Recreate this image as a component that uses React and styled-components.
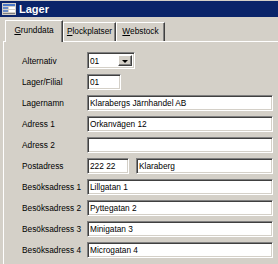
import React from "react";
import styled, { createGlobalStyle } from "styled-components";

const Global = createGlobalStyle`
  html, body { margin: 0; padding: 0; background: #d4d0c8; }
  body { font-family: "Liberation Sans", Arial, sans-serif; }
`;

const Window = styled.div`
  width: 278px;
  height: 264px;
  overflow: hidden;
  background: #d4d0c8;
  display: flex;
  flex-direction: column;
  box-sizing: border-box;
`;

const TitleBar = styled.div`
  height: 16px;
  margin-top: 1px;
  background: #0a246a;
  display: flex;
  align-items: center;
  gap: 3px;
  padding-left: 2px;
  color: #fff;
  font-weight: bold;
  font-size: 11px;
`;

const Icon = styled.svg`
  width: 14px;
  height: 12px;
  flex: none;
`;

const Body = styled.div`
  flex: 1;
  display: flex;
  flex-direction: column;
  padding: 3px 0 0 3px;
`;

const TabRow = styled.div`
  display: flex;
  align-items: flex-end;
  height: 21px;
  padding-left: 2px;
`;

const Tab = styled.div`
  box-sizing: border-box;
  width: ${(p) => p.$w}px;
  height: ${(p) => (p.$active ? "22px" : "19px")};
  padding-top: ${(p) => (p.$active ? "4px" : "3px")};
  margin-bottom: ${(p) => (p.$active ? "-1px" : "0")};
  text-align: center;
  border-left: 1px solid #fff;
  border-top: 1px solid #fff;
  border-right: 1px solid #404040;
  box-shadow: inset -1px 0 #808080;
  background: #d4d0c8;
  font-size: 8.3px;
  color: #000;
  position: relative;
  z-index: ${(p) => (p.$active ? 1 : 0)};
  u { text-decoration: underline; }
`;

const Panel = styled.div`
  flex: 1;
  border-top: 1px solid #fff;
  border-left: 1px solid #fff;
  display: flex;
  flex-direction: column;
  gap: 5px;
  padding: 10px 0 0 18px;
`;

const Row = styled.div`
  display: flex;
  align-items: center;
  height: ${(p) => p.$h || 16}px;
`;

const Label = styled.div`
  width: 65px;
  flex: none;
  font-size: 8.3px;
  color: #000;
  white-space: nowrap;
`;

const Field = styled.div`
  box-sizing: border-box;
  flex: none;
  width: ${(p) => p.$w}px;
  height: ${(p) => p.$h || 16}px;
  margin-right: ${(p) => p.$mr || 0}px;
  background: #fff;
  border: 1px solid;
  border-color: #808080 #fff #fff #808080;
  box-shadow: inset 1px 1px #404040, inset -1px -1px #d4d0c8;
  font-size: 8.3px;
  color: #000;
  display: flex;
  align-items: center;
  padding-left: 2px;
  white-space: nowrap;
  overflow: hidden;
  position: relative;
`;

const DropBtn = styled.div`
  position: absolute;
  right: 2px;
  top: 2px;
  bottom: 2px;
  width: 14px;
  box-sizing: border-box;
  background: #d4d0c8;
  border: 1px solid;
  border-color: #fff #404040 #404040 #fff;
  box-shadow: inset -1px -1px #808080;
  display: flex;
  align-items: center;
  justify-content: center;
  &::after {
    content: "";
    border-left: 3px solid transparent;
    border-right: 3px solid transparent;
    border-top: 3px solid #000;
    margin-top: 1px;
  }
`;

const rows = [
  ["Lagernamn", "Klarabergs Järnhandel AB"],
  ["Adress 1", "Orkanvägen 12"],
  ["Adress 2", ""],
];
const visits = [
  ["Besöksadress 1", "Lillgatan 1"],
  ["Besöksadress 2", "Pyttegatan 2"],
  ["Besöksadress 3", "Minigatan 3"],
  ["Besöksadress 4", "Microgatan 4"],
];

export default function App() {
  return (
    <>
      <Global />
      <Window>
        <TitleBar>
          <Icon viewBox="0 0 14 12">
            <rect x="0" y="0" width="14" height="12" fill="#d4d0c8" />
            <rect x="1" y="1" width="12" height="2" fill="#4a78c8" />
            <rect x="1" y="4" width="5" height="2" fill="#6a8cc8" />
            <rect x="7" y="4" width="6" height="2" fill="#fff" />
            <rect x="1" y="7" width="5" height="2" fill="#6a8cc8" />
            <rect x="7" y="7" width="6" height="2" fill="#fff" />
            <rect x="1" y="10" width="12" height="1" fill="#808080" />
          </Icon>
          Lager
        </TitleBar>
        <Body>
          <TabRow>
            <Tab $active $w={58}>
              <u>G</u>runddata
            </Tab>
            <Tab $w={53}>
              <u>P</u>lockplatser
            </Tab>
            <Tab $w={49}>
              <u>W</u>ebstock
            </Tab>
          </TabRow>
          <Panel>
            <Row $h={17}>
              <Label>Alternativ</Label>
              <Field $w={48} $h={17}>
                01
                <DropBtn />
              </Field>
            </Row>
            <Row>
              <Label>Lager/Filial</Label>
              <Field $w={34}>01</Field>
            </Row>
            {rows.map(([l, v]) => (
              <Row key={l}>
                <Label>{l}</Label>
                <Field $w={186}>{v}</Field>
              </Row>
            ))}
            <Row>
              <Label>Postadress</Label>
              <Field $w={42} $mr={7}>222 22</Field>
              <Field $w={137}>Klaraberg</Field>
            </Row>
            {visits.map(([l, v]) => (
              <Row key={l}>
                <Label>{l}</Label>
                <Field $w={186}>{v}</Field>
              </Row>
            ))}
          </Panel>
        </Body>
      </Window>
    </>
  );
}
